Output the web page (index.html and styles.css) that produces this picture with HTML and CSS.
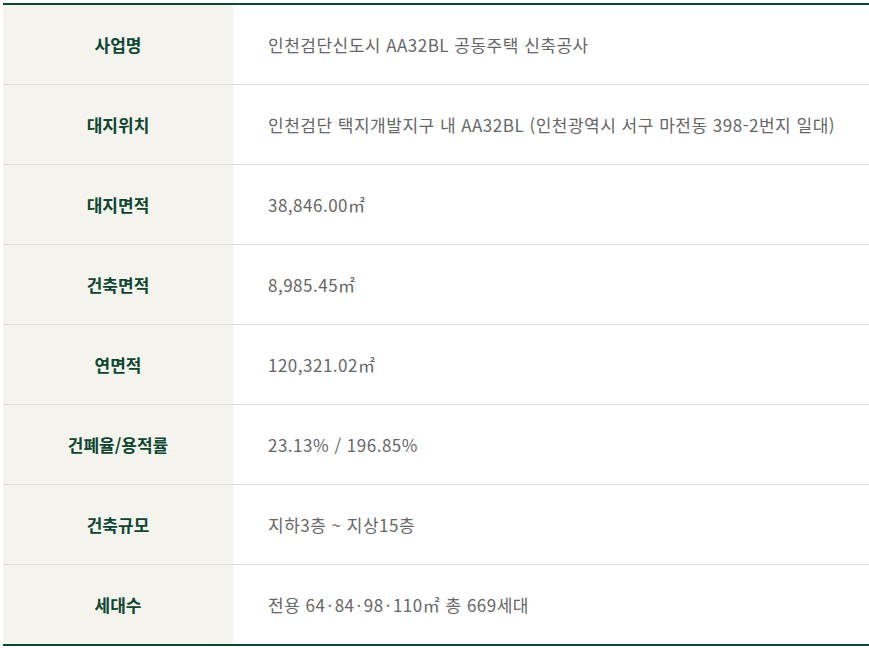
FILE: index.html
```html
<!DOCTYPE html>
<html lang="ko">
<head>
<meta charset="utf-8">
<link rel="stylesheet" href="styles.css">
</head>
<body>
<div class="wrap">
<table class="info">
<tbody>
<tr><th>사업명</th><td>인천검단신도시 AA32BL 공동주택 신축공사</td></tr>
<tr><th>대지위치</th><td>인천검단 택지개발지구 내 AA32BL (인천광역시 서구 마전동 398-2번지 일대)</td></tr>
<tr><th>대지면적</th><td>38,846.00㎡</td></tr>
<tr><th>건축면적</th><td>8,985.45㎡</td></tr>
<tr><th>연면적</th><td>120,321.02㎡</td></tr>
<tr><th>건폐율/용적률</th><td>23.13% / 196.85%</td></tr>
<tr><th>건축규모</th><td>지하3층 ~ 지상15층</td></tr>
<tr><th>세대수</th><td>전용 64<span class="dot">·</span>84<span class="dot">·</span>98<span class="dot">·</span>110㎡ 총 669세대</td></tr>
</tbody>
</table>
</div>
</body>
</html>
```
FILE: styles.css
```css
html, body { margin: 0; padding: 0; background: #fff; }
.wrap { padding: 3px 0 0 3px; }
.info {
  width: 866px;
  border-collapse: collapse;
  border-top: 2px solid #0d4631;
  border-bottom: 2px solid #0d4631;
  font-family: "Noto Sans CJK KR", "Noto Sans", sans-serif;
  font-size: 17px;
}
.info tr { border-bottom: 1px solid #dcdcdc; }
.info tr:last-child { border-bottom: none; }
.info th {
  width: 230px;
  height: 79px;
  padding: 0;
  background: #f4f3ee;
  color: #0d4631;
  font-weight: 700;
  text-align: center;
  vertical-align: middle;
}
.info td {
  height: 79px;
  padding: 0 0 0 35px;
  color: #666;
  font-weight: 400;
  letter-spacing: 0.5px;
  text-align: left;
  vertical-align: middle;
}
.dot { margin: 0 2px; }
```
